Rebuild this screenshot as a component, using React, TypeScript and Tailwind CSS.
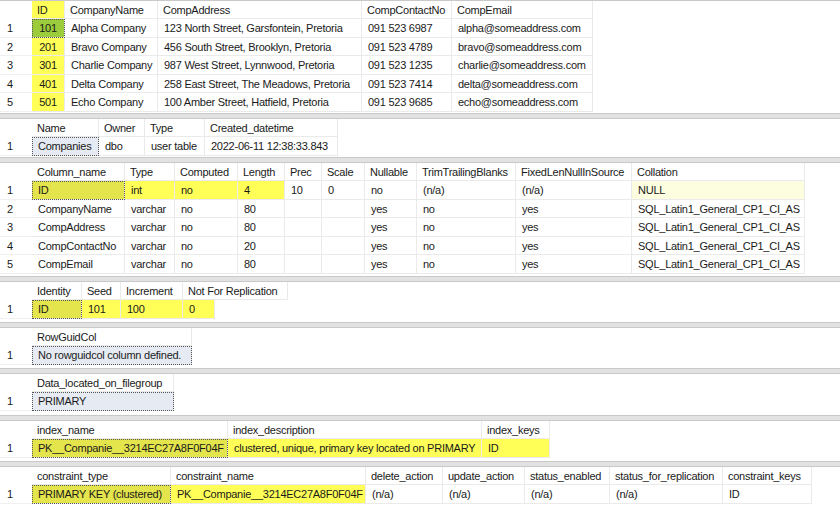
type Cell = string | { t: string; c: string }

const Y = 'bg-[#ffff57]'
const SEL = 'bg-[#e4e44c] outline outline-1 outline-dotted outline-[#555] -outline-offset-1'
const SELG = 'bg-[#9ccc3c] outline outline-1 outline-dotted outline-[#555] -outline-offset-1'
const SELB = 'bg-[#e6ebf3] outline outline-1 outline-dotted outline-[#555] -outline-offset-1'

function Grid({ cols, widths, rows, height, headCls = [] }: { cols: string[]; widths: number[]; rows: Cell[][]; height: number; headCls?: string[] }) {
    return (
        <div className="bg-white border-y border-[#c9c9c9] overflow-hidden" style={{ height }}>
            <div className="flex h-[18px]">
                <div className="w-[32px] shrink-0" />
                {cols.map((c, i) => (
                    <div key={i} style={{ width: widths[i] }} className={`shrink-0 border-r border-b border-[#eaeaea] px-[5px] leading-[18px] whitespace-nowrap overflow-hidden ${headCls[i] ?? ''}`}>{c}</div>
                ))}
            </div>
            {rows.map((r, ri) => (
                <div key={ri} className="flex h-[18.5px]">
                    <div className="w-[32px] shrink-0 pl-[7px] leading-[18px] border-b border-[#f0f0f0]">{ri + 1}</div>
                    {r.map((cell, ci) => {
                        const t = typeof cell === 'string' ? cell : cell.t
                        const c = typeof cell === 'string' ? '' : cell.c
                        return (
                            <div key={ci} style={{ width: widths[ci] }} className={`shrink-0 border-r border-b border-[#eaeaea] px-[6px] leading-[18px] whitespace-nowrap overflow-hidden ${c}`}>{t}</div>
                        )
                    })}
                </div>
            ))}
        </div>
    )
}

const Sep = () => <div className="h-[4px] bg-[#e2e2e2]" />

export default function App() {
    const companies = [
        ['Alpha Company', '123 North Street, Garsfontein, Pretoria', '091 523 6987', 'alpha@someaddress.com'],
        ['Bravo Company', '456 South Street, Brooklyn, Pretoria', '091 523 4789', 'bravo@someaddress.com'],
        ['Charlie Company', '987 West Street,  Lynnwood, Pretoria', '091 523 1235', 'charlie@someaddress.com'],
        ['Delta Company', '258 East Street,  The Meadows, Pretoria', '091 523 7414', 'delta@someaddress.com'],
        ['Echo Company', '100 Amber Street, Hatfield, Pretoria', '091 523 9685', 'echo@someaddress.com'],
    ]
    const ids = ['101', '201', '301', '401', '501']
    const colRows: Cell[][] = [
        ['CompanyName', 'varchar', 'no', '80', '', '', 'yes', 'no', 'yes', 'SQL_Latin1_General_CP1_CI_AS'],
        ['CompAddress', 'varchar', 'no', '80', '', '', 'yes', 'no', 'yes', 'SQL_Latin1_General_CP1_CI_AS'],
        ['CompContactNo', 'varchar', 'no', '20', '', '', 'yes', 'no', 'yes', 'SQL_Latin1_General_CP1_CI_AS'],
        ['CompEmail', 'varchar', 'no', '80', '', '', 'yes', 'no', 'yes', 'SQL_Latin1_General_CP1_CI_AS'],
    ]
    return (
        <div className="w-[840px] h-[518px] overflow-hidden bg-[#e2e2e2] text-[11px] tracking-[-0.25px] text-[#1a1a1a]" style={{ fontFamily: '"Liberation Sans", Arial, sans-serif' }}>
            <Grid
                height={114}
                cols={['ID', 'CompanyName', 'CompAddress', 'CompContactNo', 'CompEmail']}
                widths={[33, 93, 204, 90, 141]}
                headCls={[Y]}
                rows={companies.map((c, i) => [{ t: ids[i], c: (i === 0 ? SELG : Y) + ' text-center' }, ...c])}
            />
            <Sep />
            <Grid height={40} cols={['Name', 'Owner', 'Type', 'Created_datetime']} widths={[67, 46, 60, 133]}
                rows={[[{ t: 'Companies', c: SELB }, 'dbo', 'user table', '2022-06-11 12:38:33.843']]} />
            <Sep />
            <Grid height={115}
                cols={['Column_name', 'Type', 'Computed', 'Length', 'Prec', 'Scale', 'Nullable', 'TrimTrailingBlanks', 'FixedLenNullInSource', 'Collation']}
                widths={[93, 50, 63, 47, 37, 43, 52, 99, 116, 173]}
                rows={[[{ t: 'ID', c: SEL }, { t: 'int', c: Y }, { t: 'no', c: Y }, { t: '4', c: Y }, '10', '0', 'no', '(n/a)', '(n/a)', { t: 'NULL', c: 'bg-[#fdfde0]' }], ...colRows]} />
            <Sep />
            <Grid height={42} cols={['Identity', 'Seed', 'Increment', 'Not For Replication']} widths={[50, 39, 62, 105]}
                rows={[[{ t: 'ID', c: SEL }, { t: '101', c: Y }, { t: '100', c: Y }, { t: '0', c: Y + ' !w-[32px]' }]]} />
            <Sep />
            <Grid height={42} cols={['RowGuidCol']} widths={[160]} rows={[[{ t: 'No rowguidcol column defined.', c: SELB + ' !w-[160px]' }]]} />
            <Sep />
            <Grid height={43} cols={['Data_located_on_filegroup']} widths={[142]} rows={[[{ t: 'PRIMARY', c: SELB }]]} />
            <Sep />
            <Grid height={42} cols={['index_name', 'index_description', 'index_keys']} widths={[196, 254, 68]}
                rows={[[{ t: 'PK__Companie__3214EC27A8F0F04F', c: SEL }, { t: 'clustered, unique, primary key located on PRIMARY', c: Y }, { t: 'ID', c: Y }]]} />
            <Sep />
            <Grid height={60}
                cols={['constraint_type', 'constraint_name', 'delete_action', 'update_action', 'status_enabled', 'status_for_replication', 'constraint_keys']}
                widths={[139, 195, 77, 82, 85, 113, 89]}
                rows={[[{ t: 'PRIMARY KEY (clustered)', c: SEL }, { t: 'PK__Companie__3214EC27A8F0F04F', c: Y }, '(n/a)', '(n/a)', '(n/a)', '(n/a)', 'ID']]} />
        </div>
    )
}
